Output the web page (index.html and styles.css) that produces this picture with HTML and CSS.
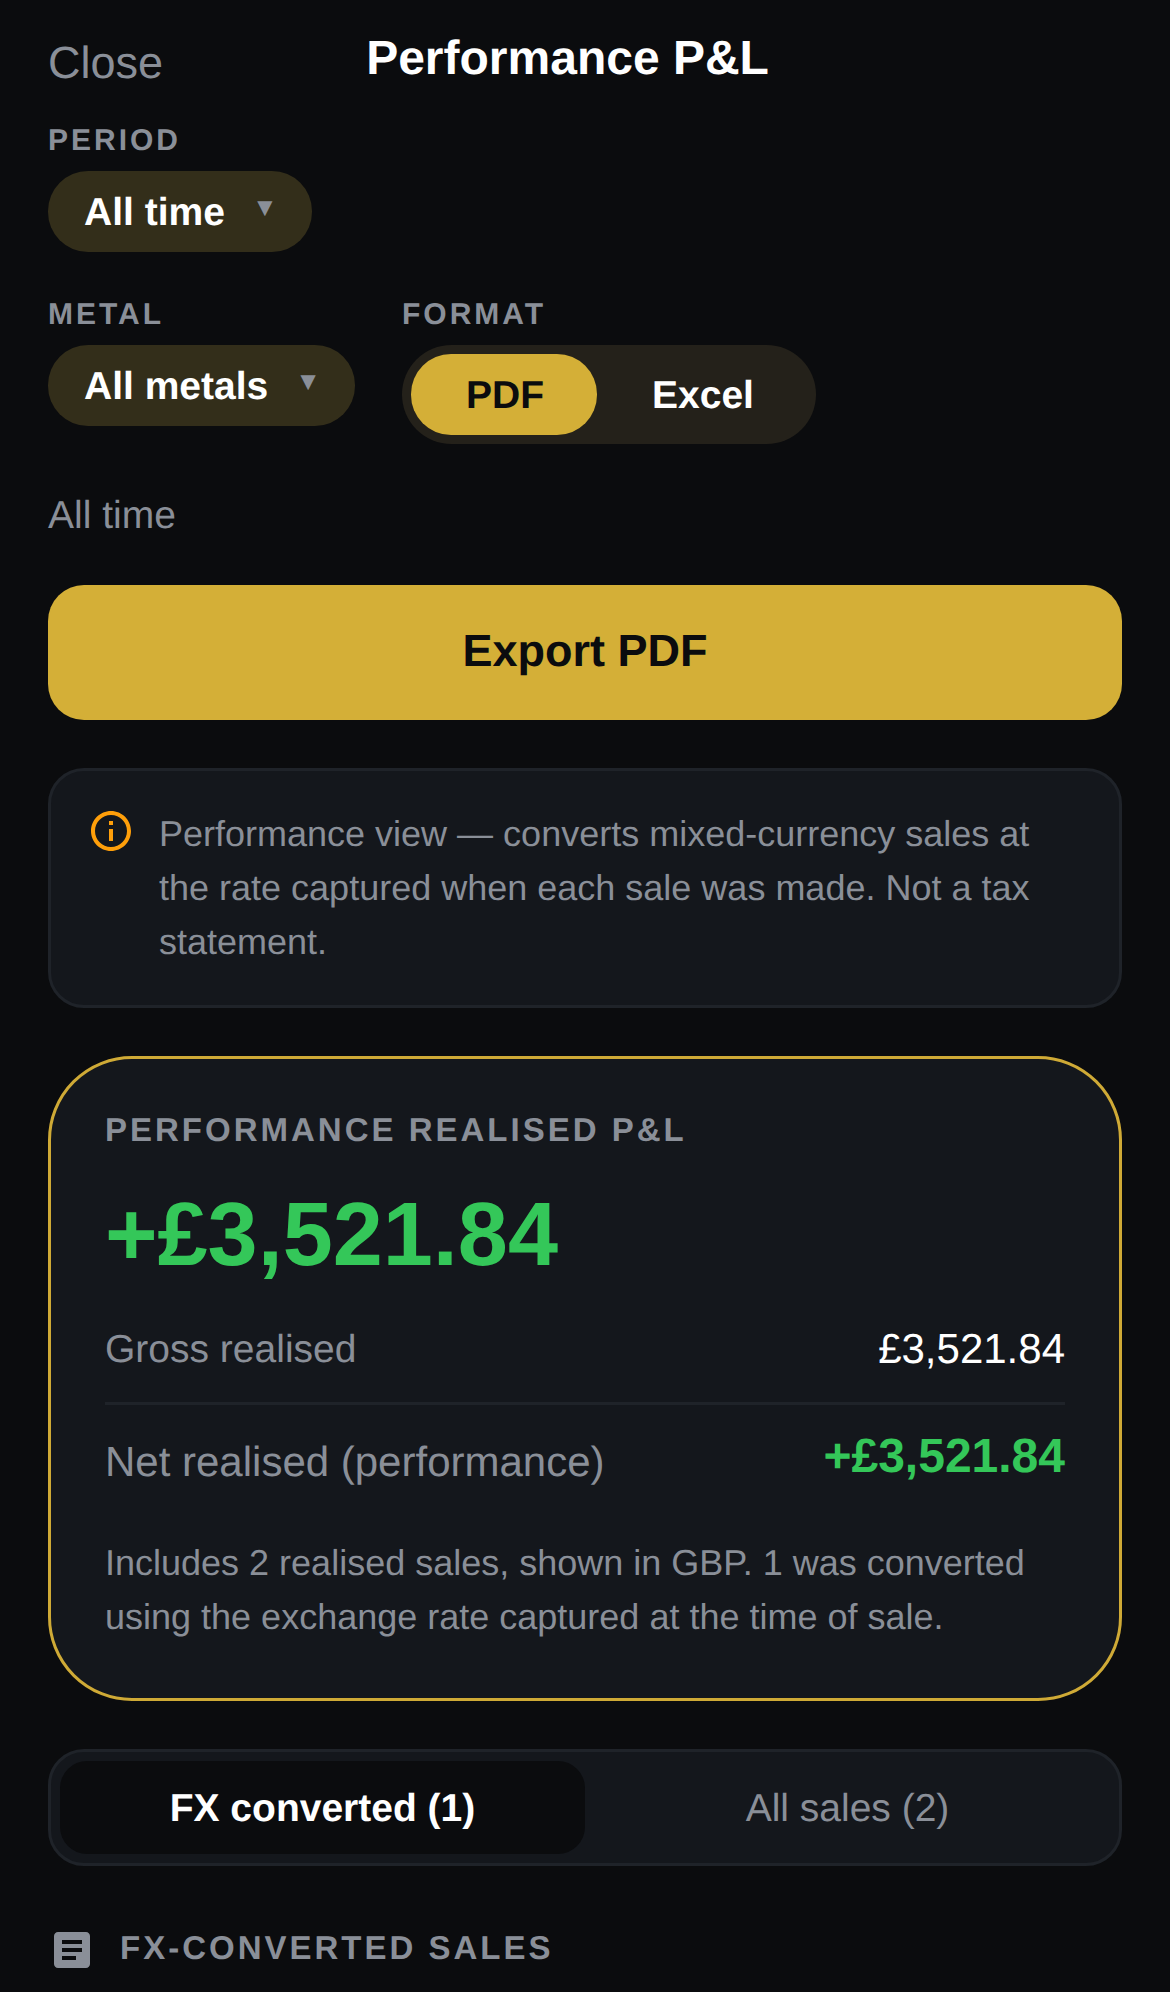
FILE: index.html
```html
<!DOCTYPE html>
<html lang="en">
<head>
<meta charset="utf-8">
<title>Performance P&amp;L</title>
<link rel="stylesheet" href="styles.css">
</head>
<body>
<div class="page">
  <header class="header">
    <span class="close">Close</span>
    <h1 class="title">Performance P&amp;L</h1>
    <span class="spacer"></span>
  </header>
  <div class="field field-period">
    <div class="label">PERIOD</div>
    <div class="select"><span>All time</span><span class="caret">▼</span></div>
  </div>
  <div class="filters">
    <div class="field">
      <div class="label">METAL</div>
      <div class="select"><span>All metals</span><span class="caret">▼</span></div>
    </div>
    <div class="field">
      <div class="label">FORMAT</div>
      <div class="segment">
        <span class="seg seg-on">PDF</span>
        <span class="seg">Excel</span>
      </div>
    </div>
  </div>
  <p class="range">All time</p>
  <button class="export">Export PDF</button>
  <div class="notice">
    <svg class="info" viewBox="0 0 24 24"><path d="M11 7h2v2h-2zm0 4h2v6h-2zm1-9C6.48 2 2 6.48 2 12s4.48 10 10 10 10-4.48 10-10S17.52 2 12 2zm0 18c-4.41 0-8-3.59-8-8s3.59-8 8-8 8 3.59 8 8-3.59 8-8 8z"/></svg>
    <p class="notice-text">Performance view — converts mixed-currency sales at the rate captured when each sale was made. Not a tax statement.</p>
  </div>
  <section class="hero">
    <div class="hero-label">PERFORMANCE REALISED P&amp;L</div>
    <div class="hero-value">+£3,521.84</div>
    <div class="row row-gross">
      <span class="row-name">Gross realised</span>
      <span class="row-val">£3,521.84</span>
    </div>
    <div class="row row-net">
      <span class="row-name-lg">Net realised (performance)</span>
      <span class="row-val-lg">+£3,521.84</span>
    </div>
    <p class="hero-note">Includes 2 realised sales, shown in GBP. 1 was converted using the exchange rate captured at the time of sale.</p>
  </section>
  <div class="tabs">
    <div class="tab tab-on">FX converted (1)</div>
    <div class="tab">All sales (2)</div>
  </div>
  <div class="section-head">
    <svg class="article" viewBox="0 0 24 24"><path d="M19 3H5c-1.1 0-2 .9-2 2v14c0 1.1.9 2 2 2h14c1.1 0 2-.9 2-2V5c0-1.1-.9-2-2-2zm-5 14H7v-2h7v2zm3-4H7v-2h10v2zm0-4H7V7h10v2z"/></svg>
    <span class="section-title">FX-CONVERTED SALES</span>
  </div>
</div>
</body>
</html>
```
FILE: styles.css
```css
* { box-sizing: border-box; }
html, body { margin: 0; padding: 0; height: 1992px; overflow: hidden; background: #0b0c0e; }
body { font-family: "Liberation Sans", Arial, sans-serif; color: #fff; text-rendering: geometricPrecision; }
.page { padding: 31px 48px 0; }
.header { display: flex; justify-content: space-between; align-items: flex-start; height: 90px; }
.close { font-size: 45px; line-height: 64px; color: #8a8f98; }
.title { margin: 0; font-size: 48px; line-height: 56px; font-weight: 700; color: #fff; }
.spacer { width: 150px; }
.label { font-size: 30px; line-height: 40px; font-weight: 700; letter-spacing: 3px; color: #8a8f98; margin-bottom: 10px; }
.field-period { margin-bottom: 43px; }
.field { display: flex; flex-direction: column; align-items: flex-start; }
.select { display: flex; align-items: center; gap: 27px; height: 81px; padding: 2px 34px 0 36px; border-radius: 40px; background: #332e1a; font-size: 39px; font-weight: 700; }
.caret { font-size: 26px; font-weight: 400; color: #8a8f98; padding-bottom: 10px; }
.filters { display: flex; gap: 47px; }
.segment { display: flex; padding: 9px; border-radius: 50px; background: #24211a; }
.seg { display: flex; align-items: center; height: 81px; padding: 2px 53px 0 55px; border-radius: 40px; font-size: 39px; font-weight: 700; color: #fff; }
.seg-on { background: #d4af37; color: #0b0c0e; }
.range { margin: 45px 0 0; font-size: 39px; line-height: 54px; color: #8a8f98; }
.export { display: block; width: 100%; height: 135px; margin-top: 42px; padding: 0 0 3px; border: 0; border-radius: 36px; background: #d4af37; color: #0b0c0e; font-family: inherit; font-size: 45px; font-weight: 700; text-rendering: geometricPrecision; }
.notice { display: flex; gap: 24px; margin-top: 48px; padding: 36px; border: 3px solid #1f2329; border-radius: 36px; background: #14171c; }
.info { width: 48px; height: 48px; flex: none; fill: #ff9f0a; }
.notice-text { margin: 0; font-size: 36px; line-height: 54px; color: #8a8f98; }
.hero { margin-top: 48px; padding: 54px; border: 3px solid #cfaa36; border-radius: 84px; background: #14171c; }
.hero-label { font-size: 33px; line-height: 33px; font-weight: 700; letter-spacing: 3px; color: #8a8f98; }
.hero-value { margin-top: 35px; font-size: 90px; line-height: 108px; font-weight: 700; color: #34c759; }
.row { display: flex; justify-content: space-between; }
.row-gross { margin-top: 34px; padding-bottom: 25px; border-bottom: 3px solid #1f2329; align-items: center; }
.row-net { margin-top: 27px; align-items: flex-start; }
.row-name { font-size: 39px; line-height: 54px; color: #8a8f98; }
.row-val { font-size: 42px; line-height: 51px; padding-bottom: 3px; color: #fff; }
.row-name-lg { font-size: 42px; line-height: 60px; color: #8a8f98; }
.row-val-lg { font-size: 48px; line-height: 49px; font-weight: 700; color: #34c759; }
.hero-note { margin: 44px 0 0; font-size: 36px; line-height: 54px; color: #8a8f98; }
.tabs { display: flex; margin-top: 48px; padding: 9px; border: 3px solid #1f2329; border-radius: 36px; background: #14171c; }
.tab { flex: 1; display: flex; align-items: center; justify-content: center; height: 93px; padding-top: 2px; border-radius: 27px; font-size: 39px; color: #8a8f98; }
.tab-on { background: #0b0c0e; color: #fff; font-weight: 700; }
.section-head { display: flex; align-items: center; gap: 24px; margin-top: 60px; }
.article { width: 48px; height: 48px; flex: none; fill: #8a8f98; }
.section-title { font-size: 33px; line-height: 40px; padding-bottom: 5px; font-weight: 700; letter-spacing: 3px; color: #8a8f98; }
```
